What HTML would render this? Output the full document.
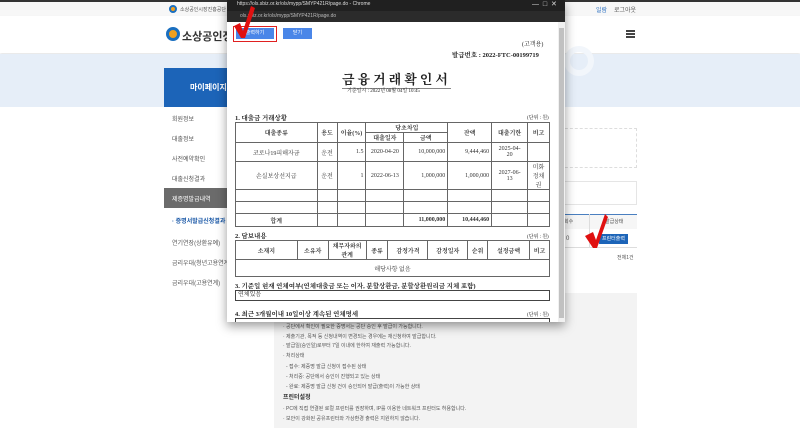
<!DOCTYPE html>
<html><head><meta charset="utf-8"><style>
*{margin:0;padding:0;box-sizing:border-box}
body{width:800px;height:446px;overflow:hidden;background:#fff;position:relative;font-family:"Liberation Sans","Noto Sans CJK KR",sans-serif;color:#333}
.a{position:absolute;white-space:nowrap}
.m{font-size:6px;color:#555}
.pd{font-family:"Liberation Serif","Noto Serif CJK KR",serif;color:#222}
table{border-collapse:collapse;position:absolute;font-family:"Liberation Serif","Noto Serif CJK KR",serif;font-size:6px;color:#333}
td{border:1px solid #666;text-align:center;padding:0}
.r{text-align:right;padding-right:2px}
</style></head><body>
<div class="a" style="left:0;top:0;width:800px;height:2px;background:#333"></div>
<div class="a" style="left:0;top:2px;width:800px;height:14px;background:#f7f7f7"></div>
<div class="a" style="left:169px;top:5px;width:8px;height:8px;border-radius:50%;background:#f0a020;border:2px solid #1a6fc0"></div>
<div class="a m" style="left:180px;top:6px;font-size:5px">소상공인시장진흥공단</div>
<div class="a m" style="left:596px;top:5px;color:#2a6fc0">일람</div>
<div class="a m" style="left:614px;top:5px">로그아웃</div>
<div class="a" style="left:0;top:16px;width:800px;height:37px;background:#fff;box-shadow:0 2px 3px rgba(0,0,0,.1)"></div>
<div class="a" style="left:166px;top:27px;width:14px;height:14px;border-radius:50%;background:#f0a020;border:3px solid #1a6fc0"></div>
<div class="a" style="left:182px;top:28px;font-size:11px;font-weight:bold;color:#333">소상공인정책</div>
<div class="a" style="left:626px;top:30px;width:9px;height:2px;background:#444;box-shadow:0 3px 0 #444,0 6px 0 #444"></div>
<div class="a" style="left:0;top:54px;width:800px;height:53px;background:#e6eef8"></div>
<div class="a" style="left:564px;top:46px;width:30px;height:30px;border-radius:50%;border:6px solid #f2f6fb"></div>
<div class="a" style="left:164px;top:68px;width:72px;height:39px;background:#1c64b8"></div>
<div class="a" style="left:190px;top:82px;font-size:8px;color:#fff;font-weight:bold">마이페이지</div>
<div class="a" style="left:164px;top:107px;width:72px;height:186px;background:#fff;border-right:1px solid #eee"></div>
<div class="a m" style="left:172px;top:114px">회원정보</div>
<div class="a m" style="left:172px;top:134px">대출정보</div>
<div class="a m" style="left:172px;top:154px">사전예약확인</div>
<div class="a m" style="left:172px;top:174px">대출신청결과</div>
<div class="a" style="left:164px;top:188px;width:72px;height:20px;background:#6b6b6b"></div>
<div class="a m" style="left:172px;top:194px;color:#fff">제증명발급내역</div>
<div class="a m" style="left:172px;top:216px;color:#1c5aa8;font-weight:bold">· 증명서발급신청결과</div>
<div class="a m" style="left:172px;top:238px">연기연장(상환유예)</div>
<div class="a m" style="left:172px;top:258px">금리우대(청년고용연계</div>
<div class="a m" style="left:172px;top:278px">금리우대(고용연계)</div>
<div class="a" style="left:560px;top:128px;width:77px;height:40px;border:1px dashed #ddd"></div>
<div class="a" style="left:560px;top:181px;width:77px;height:24px;border:1px solid #e5e5e5"></div>
<div class="a" style="left:560px;top:214px;width:77px;height:34px;border-top:1px solid #4a7fc0;border-bottom:1px solid #ddd;background:linear-gradient(#f6f6f6 0 14px,#fff 14px)"></div>
<div class="a" style="left:589px;top:214px;width:1px;height:34px;background:#ddd"></div>
<div class="a m" style="left:564px;top:218px;font-size:5px">회수</div>
<div class="a m" style="left:605px;top:218px;font-size:5px">발급상태</div>
<div class="a m" style="left:566px;top:236px">0</div>
<div class="a" style="left:599px;top:234px;width:29px;height:10px;background:#1c64b8;color:#fff;font-size:5px;text-align:center;line-height:10px">프린터출력</div>
<div class="a m" style="left:617px;top:254px;font-size:5px">전체1건</div>
<div class="a" style="left:274px;top:293px;width:363px;height:135px;background:#f3f3f3"></div>
<div class="a m" style="left:283px;top:323px;font-size:5px">· 공단에서 확인이 필요한 증명서는 공단 승인 후 발급이 가능합니다.</div>
<div class="a m" style="left:283px;top:333px;font-size:5px">· 제출기관, 목적 등 신청내역이 변경되는 경우에는 재신청하여 발급합니다.</div>
<div class="a m" style="left:283px;top:342px;font-size:5px">· 발급일(승인일)로부터 7일 이내에 한하여 재출력 가능합니다.</div>
<div class="a m" style="left:283px;top:352px;font-size:5px">· 처리상태</div>
<div class="a m" style="left:286px;top:363px;font-size:5px">- 접수: 제증명 발급 신청이 접수된 상태</div>
<div class="a m" style="left:286px;top:373px;font-size:5px">- 처리중: 공단에서 승인이 진행되고 있는 상태</div>
<div class="a m" style="left:286px;top:383px;font-size:5px">- 완료: 제증명 발급 신청 건이 승인되어 발급(출력)이 가능한 상태</div>
<div class="a" style="left:283px;top:392px;font-size:6px;font-weight:bold;color:#333">프린터설정</div>
<div class="a m" style="left:283px;top:405px;font-size:5px">· PC에 직접 연결된 로컬 프린터를 권장하며, IP를 이용한 네트워크 프린터도 허용합니다.</div>
<div class="a m" style="left:283px;top:415px;font-size:5px">· 보안이 강화된 공유프린터와 가상환경 출력은 지원하지 않습니다.</div>
<svg class="a" style="left:583px;top:212px" width="26" height="38"><path d="M2 24 L10 20 L13 28 L22 2 L25 5 L14 36 L10 36 Z" fill="#e01010"/></svg>
<div class="a" style="left:227px;top:0;width:338px;height:322px;background:#fff;box-shadow:0 4px 10px rgba(0,0,0,.4)"></div>
<div class="a" style="left:227px;top:0;width:338px;height:11px;background:#202020"></div>
<div class="a" style="left:237px;top:1px;font-size:5px;color:#ddd">https://ols.sbiz.or.kr/ols/mypp/SMYP421R/page.do - Chrome</div>
<div class="a" style="left:532px;top:0;font-size:7px;color:#ddd">—&nbsp;&nbsp;□&nbsp;&nbsp;✕</div>
<div class="a" style="left:227px;top:11px;width:338px;height:11px;background:#2b2b2b"></div>
<div class="a" style="left:240px;top:13px;font-size:5px;color:#bbb">ols.sbiz.or.kr/ols/mypp/SMYP421R/page.do</div>
<div class="a" style="left:558px;top:22px;width:7px;height:300px;background:#f1f1f1"></div>
<div class="a" style="left:559px;top:28px;width:5px;height:290px;background:#c1c1c1"></div>
<div class="a" style="left:233px;top:26px;width:44px;height:16px;border:1.5px solid #e02020"></div>
<div class="a" style="left:236px;top:28px;width:38px;height:11px;background:#4a86e8;color:#fff;font-size:5px;text-align:center;line-height:11px">출력하기</div>
<div class="a" style="left:283px;top:28px;width:29px;height:11px;background:#4a86e8;color:#fff;font-size:5px;text-align:center;line-height:11px">닫기</div>
<svg class="a" style="left:232px;top:4px" width="24" height="36"><path d="M2 22 L8 19 L11 27 L19 2 L23 4 L13 34 L9 34 Z" fill="#e01010"/></svg>
<div class="a pd" style="left:522px;top:39px;font-size:6px">(고객용)</div>
<div class="a pd" style="left:452px;top:50px;font-size:6.5px;font-weight:bold">발급번호 : 2022-FTC-00199719</div>
<div class="a pd" style="left:342px;top:69px;font-size:13px;font-weight:bold;letter-spacing:3px;border-bottom:1px solid #888">금융거래확인서</div>
<div class="a pd" style="left:347px;top:87px;font-size:5px">기준일시 : 2022년 08월 04일 10:45</div>
<div class="a pd" style="left:235px;top:113px;font-size:6.5px;font-weight:bold">1. 대출금 거래상황</div>
<div class="a pd" style="left:527px;top:114px;font-size:5px">(단위 : 원)</div>
<table style="left:235px;top:122px;width:315px;border:1.5px solid #444">
<colgroup><col style="width:82px"><col style="width:20px"><col style="width:29px"><col style="width:38px"><col style="width:44px"><col style="width:44px"><col style="width:36px"><col style="width:22px"></colgroup>
<tr style="height:10px"><td rowspan="2"><b>대출종류</b></td><td rowspan="2"><b>용도</b></td><td rowspan="2"><b>이율(%)</b></td><td colspan="2"><b>당초차입</b></td><td rowspan="2"><b>잔액</b></td><td rowspan="2"><b>대출기한</b></td><td rowspan="2"><b>비고</b></td></tr>
<tr style="height:9px"><td><b>대출일자</b></td><td><b>금액</b></td></tr>
<tr style="height:19px"><td>코로나19피해자금</td><td>운전</td><td class="r">1.5</td><td>2020-04-20</td><td class="r">10,000,000</td><td class="r">9,444,460</td><td>2025-04-<br>20</td><td></td></tr>
<tr style="height:27px"><td>손실보상선지급</td><td>운전</td><td class="r">1</td><td>2022-06-13</td><td class="r">1,000,000</td><td class="r">1,000,000</td><td>2027-06-<br>13</td><td>미화<br>정채<br>권</td></tr>
<tr style="height:12px"><td></td><td></td><td></td><td></td><td></td><td></td><td></td><td></td></tr>
<tr style="height:12px"><td></td><td></td><td></td><td></td><td></td><td></td><td></td><td></td></tr>
<tr style="height:13px;font-weight:bold"><td>합계</td><td></td><td></td><td></td><td class="r">11,000,000</td><td class="r">10,444,460</td><td></td><td></td></tr>
</table>
<div class="a pd" style="left:235px;top:231px;font-size:6.5px;font-weight:bold">2. 담보내용</div>
<div class="a pd" style="left:527px;top:233px;font-size:5px">(단위 : 원)</div>
<table style="left:235px;top:240px;width:315px;border:1.5px solid #444">
<colgroup><col style="width:62px"><col style="width:31px"><col style="width:38px"><col style="width:22px"><col style="width:40px"><col style="width:40px"><col style="width:20px"><col style="width:42px"><col style="width:20px"></colgroup>
<tr style="height:18px;font-weight:bold"><td>소재지</td><td>소유자</td><td>채무자와의<br>관계</td><td>종류</td><td>감정가격</td><td>감정일자</td><td>순위</td><td>설정금액</td><td>비고</td></tr>
<tr style="height:17px"><td colspan="9">해당사항 없음</td></tr>
</table>
<div class="a pd" style="left:235px;top:281px;font-size:6.5px;font-weight:bold">3. 기준일 현재 연체여부(연체대출금 또는 이자, 분할상환금, 분할상환원리금 지체 포함)</div>
<div class="a pd" style="left:235px;top:290px;width:315px;height:11px;border:1.5px solid #444;font-size:6px;padding-left:2px;line-height:8px">연체있음</div>
<div class="a pd" style="left:235px;top:309px;font-size:6.5px;font-weight:bold">4. 최근 3개월이내 10일이상 계속된 연체명세</div>
<div class="a pd" style="left:527px;top:311px;font-size:5px">(단위 : 원)</div>
<div class="a" style="left:235px;top:318px;width:315px;height:4px;border:1.5px solid #444;border-bottom:none"></div>
</body></html>
